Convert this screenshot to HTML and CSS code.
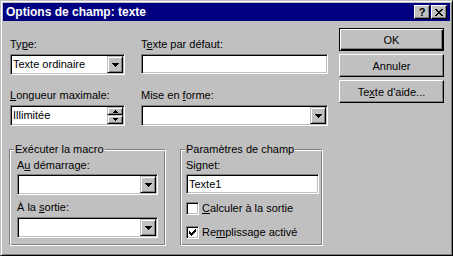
FILE: index.html
```html
<!DOCTYPE html>
<html lang="fr">
<head>
    <meta charset="UTF-8">
    <title>Options de champ: texte</title>
    <link rel="stylesheet" href="styles.css">
</head>
<body>
    <div class="window">
        <div class="titlebar">
            <span class="title">Options de champ: texte</span>
            <div class="caption-btns">
                <span class="cap-btn">?</span>
                <span class="cap-btn">
                    <svg width="8" height="7" viewBox="0 0 8 7" shape-rendering="crispEdges"><path d="M0 0h2v1H0zM6 0h2v1H6zM1 1h2v1H1zM5 1h2v1H5zM2 2h4v1H2zM3 3h2v1H3zM2 4h4v1H2zM1 5h2v1H1zM5 5h2v1H5zM0 6h2v1H0zM6 6h2v1H6z" fill="#000"/></svg>
                </span>
            </div>
        </div>

        <div class="body">
            <div class="form">
                <div class="fields">
                    <div class="field">
                        <label>Ty<u>p</u>e:</label>
                        <div class="combo">
                            <span class="value">Texte ordinaire</span>
                            <span class="drop"><svg width="7" height="4" viewBox="0 0 7 4" shape-rendering="crispEdges"><path d="M0 0h7v1H0zM1 1h5v1H1zM2 2h3v1H2zM3 3h1v1H3z" fill="#000"/></svg></span>
                        </div>
                    </div>
                    <div class="field">
                        <label>T<u>e</u>xte par défaut:</label>
                        <div class="edit"></div>
                    </div>
                    <div class="field">
                        <label><u>L</u>ongueur maximale:</label>
                        <div class="combo">
                            <span class="value">Illimitée</span>
                            <span class="spin">
                                <span class="spin-btn"><svg width="5" height="3" viewBox="0 0 5 3" shape-rendering="crispEdges"><path d="M2 0h1v1H2zM1 1h3v1H1zM0 2h5v1H0z" fill="#000"/></svg></span>
                                <span class="spin-btn"><svg width="5" height="3" viewBox="0 0 5 3" shape-rendering="crispEdges"><path d="M0 0h5v1H0zM1 1h3v1H1zM2 2h1v1H2z" fill="#000"/></svg></span>
                            </span>
                        </div>
                    </div>
                    <div class="field">
                        <label>Mise en <u>f</u>orme:</label>
                        <div class="combo">
                            <span class="value"></span>
                            <span class="drop"><svg width="7" height="4" viewBox="0 0 7 4" shape-rendering="crispEdges"><path d="M0 0h7v1H0zM1 1h5v1H1zM2 2h3v1H2zM3 3h1v1H3z" fill="#000"/></svg></span>
                        </div>
                    </div>
                </div>

                <div class="groups">
                    <div class="group macro">
                        <span class="group-title">Exécuter la macro</span>
                        <label class="first">A<u>u</u> démarrage:</label>
                        <div class="combo">
                            <span class="value"></span>
                            <span class="drop"><svg width="7" height="4" viewBox="0 0 7 4" shape-rendering="crispEdges"><path d="M0 0h7v1H0zM1 1h5v1H1zM2 2h3v1H2zM3 3h1v1H3z" fill="#000"/></svg></span>
                        </div>
                        <label class="next">À la <u>s</u>ortie:</label>
                        <div class="combo">
                            <span class="value"></span>
                            <span class="drop"><svg width="7" height="4" viewBox="0 0 7 4" shape-rendering="crispEdges"><path d="M0 0h7v1H0zM1 1h5v1H1zM2 2h3v1H2zM3 3h1v1H3z" fill="#000"/></svg></span>
                        </div>
                    </div>
                    <div class="group params">
                        <span class="group-title">Paramètres de champ</span>
                        <label class="first">Si<u>g</u>net:</label>
                        <div class="edit"><span class="value">Texte1</span></div>
                        <div class="check">
                            <span class="box"></span>
                            <span><u>C</u>alculer à la sortie</span>
                        </div>
                        <div class="check second">
                            <span class="box"><svg width="7" height="7" viewBox="0 0 7 7" shape-rendering="crispEdges"><path d="M6 0h1v1H6zM5 1h2v1H5zM0 2h1v1H0zM4 2h3v1H4zM0 3h2v1H0zM3 3h3v1H3zM0 4h5v1H0zM1 5h3v1H1zM2 6h1v1H2z" fill="#000"/></svg></span>
                            <span>Re<u>m</u>plissage activé</span>
                        </div>
                    </div>
                </div>
            </div>

            <div class="actions">
                <div class="btn default">OK</div>
                <div class="btn">Annuler</div>
                <div class="btn">Te<u>x</u>te d'aide...</div>
            </div>
        </div>
    </div>
</body>
</html>
```

FILE: styles.css
```css
* {
    box-sizing: border-box;
}
html, body {
    margin: 0;
}
body {
    font-family: "Liberation Sans", Arial, sans-serif;
    font-size: 11px;
    color: #000;
    background: #c0c0c0;
}
label {
    display: block;
    line-height: 13px;
}

/* window frame */
.window {
    width: 453px;
    height: 256px;
    padding: 2px;
    background: #c0c0c0;
    border: 1px solid;
    border-color: #c0c0c0 #000 #000 #c0c0c0;
    box-shadow: inset 1px 1px #fff, inset -1px -1px #808080;
    overflow: hidden;
}
.titlebar {
    height: 18px;
    background: #000080;
    color: #fff;
    display: flex;
    align-items: center;
    justify-content: space-between;
    padding: 0 3px;
}
.title {
    font-size: 12px;
    font-weight: bold;
    line-height: 18px;
    white-space: nowrap;
}
.caption-btns {
    display: flex;
    gap: 1px;
}
.cap-btn {
    width: 16px;
    height: 14px;
    background: #c0c0c0;
    color: #000;
    border: 1px solid;
    border-color: #fff #000 #000 #fff;
    box-shadow: inset -1px -1px #808080;
    display: flex;
    align-items: center;
    justify-content: center;
    font-size: 11px;
    font-weight: bold;
    line-height: 1;
}

/* dialog body */
.body {
    display: flex;
    padding: 7px 0 0 7px;
}
.form {
    width: 318px;
    margin-right: 11px;
    padding-top: 10px;
}
.fields {
    display: grid;
    grid-template-columns: 115px 187px;
    column-gap: 16px;
    row-gap: 14px;
}
.field label {
    margin-bottom: 3px;
}

/* sunken controls */
.combo, .edit {
    height: 21px;
    background: #fff;
    border: 1px solid;
    border-color: #808080 #fff #fff #808080;
    box-shadow: inset 1px 1px #000, inset -1px -1px #c0c0c0;
    padding: 1px;
    display: flex;
}
.edit {
    height: 20px;
}
.value {
    flex: 1;
    line-height: 17px;
    padding-left: 1px;
    white-space: nowrap;
}
.edit .value {
    line-height: 16px;
}
.drop, .spin-btn {
    width: 16px;
    height: 17px;
    background: #c0c0c0;
    border: 1px solid;
    border-color: #c0c0c0 #000 #000 #c0c0c0;
    box-shadow: inset 1px 1px #fff, inset -1px -1px #808080;
    display: flex;
    align-items: center;
    justify-content: center;
}
.spin {
    display: flex;
    flex-direction: column;
}
.spin-btn {
    height: 8px;
}
.spin-btn + .spin-btn {
    height: 9px;
}

/* group boxes */
.groups {
    display: flex;
    gap: 14px;
    margin: 23px 0 0 -1px;
}
.group {
    position: relative;
    height: 97px;
    border: 1px solid;
    border-color: #808080 #fff #fff #808080;
    box-shadow: inset 1px 1px #fff, inset -1px -1px #808080;
}
.group-title {
    position: absolute;
    top: -7px;
    left: 4px;
    padding: 0 1px;
    background: #c0c0c0;
    line-height: 13px;
    white-space: nowrap;
}
.macro {
    width: 157px;
    padding: 9px 7px 0;
}
.params {
    width: 143px;
    padding: 9px 3px 0 5px;
}
.group label.first {
    margin-bottom: 2px;
}
.group label.next {
    margin: 6px 0 3px;
}
.check {
    display: flex;
    align-items: center;
    gap: 3px;
    height: 13px;
    line-height: 13px;
    margin-top: 8px;
}
.check.second {
    margin-top: 11px;
}
.box {
    width: 13px;
    height: 13px;
    background: #fff;
    border: 1px solid;
    border-color: #808080 #fff #fff #808080;
    box-shadow: inset 1px 1px #000, inset -1px -1px #c0c0c0;
    display: flex;
    align-items: center;
    justify-content: center;
}

/* push buttons */
.actions {
    width: 105px;
    display: flex;
    flex-direction: column;
    gap: 3px;
}
.btn {
    height: 23px;
    background: #c0c0c0;
    border: 1px solid;
    border-color: #fff #000 #000 #fff;
    box-shadow: inset -1px -1px #808080;
    display: flex;
    align-items: center;
    justify-content: center;
    white-space: nowrap;
}
.btn.default {
    border-color: #000;
    box-shadow: inset 1px 1px #fff, inset -1px -1px #000, inset -2px -2px #808080;
}
```
